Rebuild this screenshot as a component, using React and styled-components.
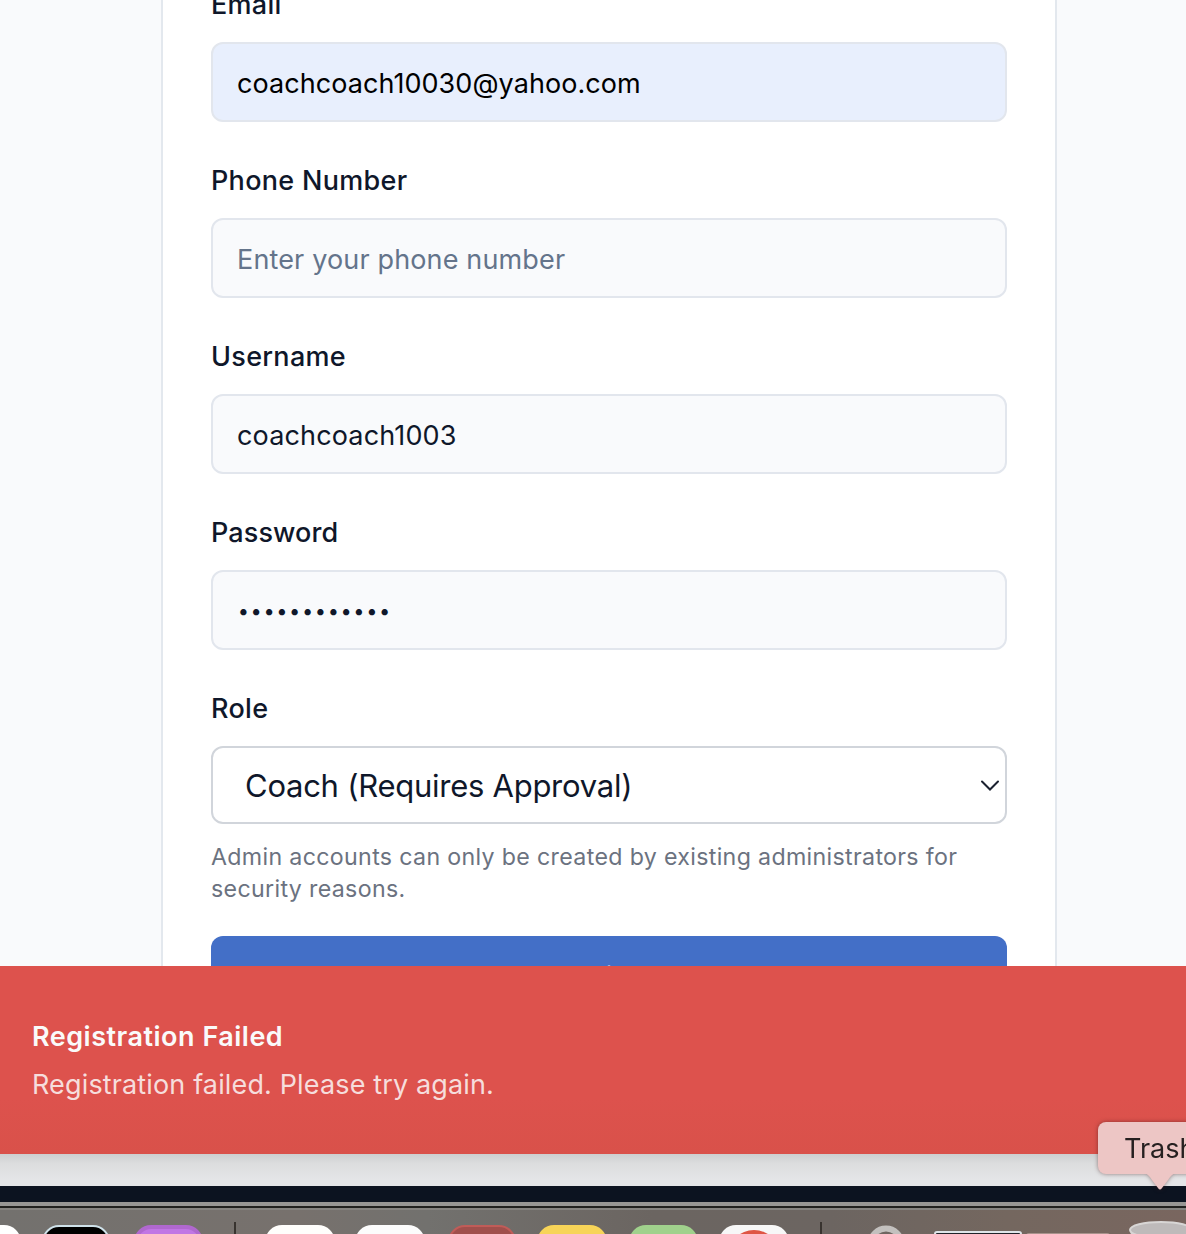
import React from "react";
import styled, { createGlobalStyle } from "styled-components";

const GlobalStyle = createGlobalStyle`
  * { box-sizing: border-box; }
  body {
    margin: 0;
    overflow: hidden;
    font-family: Inter, "Liberation Sans", sans-serif;
    color: #0f172a;
  }
`;

const Desktop = styled.div`
  position: relative;
  width: 1186px;
  height: 1234px;
  display: flex;
  flex-direction: column;
  overflow: hidden;
`;

const Page = styled.main`
  height: 966px;
  overflow: hidden;
  background: #f9fafc;
  padding-left: 161px;
`;

const Card = styled.form`
  width: 896px;
  height: 1100px;
  margin-top: -9px;
  padding: 0 48px;
  background: #fff;
  border: 2px solid #e3e8ee;
  border-width: 0 2px;
  display: flex;
  flex-direction: column;
`;

const Field = styled.div`
  display: flex;
  flex-direction: column;
  gap: 23px;
  margin-bottom: 45px;
`;

const Label = styled.label`
  height: 28px;
  line-height: 27px;
  font-size: 27px;
  font-weight: 500;
  letter-spacing: ${(p) => p.$track ?? 0.3}px;
  white-space: nowrap;
`;

const InputBox = styled.div`
  height: 80px;
  padding: 3px 24px 0;
  border: 2px solid #e2e6ed;
  border-radius: 12px;
  background: ${(p) => (p.$autofilled ? "#e8effd" : "#f9fafc")};
  color: ${(p) => (p.$placeholder ? "#64748b" : p.$autofilled ? "#000" : "#0f172a")};
  display: flex;
  align-items: center;
  font-size: 27px;
  letter-spacing: ${(p) => (p.$autofilled ? 0.06 : 0.15)}px;
  white-space: nowrap;
`;

const Dots = styled.span`
  margin: 0 0 1px 0.7px;
  font-size: 20px;
  letter-spacing: 1.6px;
`;

const SelectBox = styled.div`
  height: 78px;
  padding: 1px 5px 0 32px;
  border: 2px solid #d1d5db;
  border-radius: 12px;
  background: #fff;
  display: flex;
  align-items: center;
  justify-content: space-between;
  font-size: 31px;
  letter-spacing: -0.26px;
  white-space: nowrap;
`;

const Help = styled.p`
  margin: -28px 0 31px;
  color: #6b7280;
  font-size: 23.2px;
  line-height: 32px;
  letter-spacing: 0.33px;
  white-space: nowrap;
`;

const Submit = styled.button`
  height: 80px;
  flex: none;
  border: 0;
  padding: 0;
  border-radius: 12px;
  background: #436fc7;
  color: #fff;
  font: 500 27px Inter, sans-serif;
`;

const Toast = styled.section`
  height: 188px;
  padding: 55px 32px 0;
  background: linear-gradient(#dd524d 70%, #d9514a);
  color: #fafafa;
  display: flex;
  flex-direction: column;
  gap: 16px;
`;

const ToastTitle = styled.div`
  font-size: 27px;
  line-height: 32px;
  font-weight: 600;
  letter-spacing: 0.5px;
`;

const ToastText = styled.div`
  font-size: 27px;
  line-height: 32px;
  letter-spacing: 0.14px;
  color: #f6dddc;
`;

const PageEdge = styled.div`
  height: 32px;
  background: linear-gradient(#cdcfd0, #dcddde 30%, #e4e5e7 80%);
`;

const Wallpaper = styled.div`
  height: 16px;
  background: #0c1320;
`;

const Dock = styled.footer`
  height: 32px;
  border-top: 4px solid #979694;
  box-shadow: inset 0 2px #21211f, inset 0 4px #858380;
  background: linear-gradient(90deg, #73716e, #77716d 25%, #72716e 36%, #6b6561 55%, #6c6561 70%, #74675f 85%, #79665f);
  display: flex;
  align-items: flex-start;
  overflow: hidden;
`;

const AppIcon = styled.div`
  flex: none;
  width: ${(p) => p.$w}px;
  height: 68px;
  margin: 18.5px 0 0 ${(p) => p.$gap}px;
  border-radius: 17px;
  background: ${(p) => p.$bg};
  border: ${(p) => p.$border || "0"};
  overflow: hidden;
`;

const Divider = styled.div`
  flex: none;
  width: 2px;
  height: 40px;
  margin: 16px 0 0 ${(p) => p.$gap}px;
  background: #38332f;
`;

const DockWindow = styled.div`
  flex: none;
  width: ${(p) => p.$w}px;
  height: 40px;
  margin: ${(p) => p.$top}px 0 0 ${(p) => p.$gap}px;
  border: 2px solid ${(p) => p.$edge};
  border-radius: 3px;
  background: #20242a;
`;

const DockArt = styled.svg`
  flex: none;
  display: block;
  margin: ${(p) => p.$top}px 0 0 ${(p) => p.$gap}px;
`;

const Tooltip = styled.div`
  position: absolute;
  left: 1098px;
  top: 1122px;
  width: 124px;
  height: 52px;
  padding-left: 26px;
  border-radius: 8px;
  background: #edc6c5;
  color: #262020;
  font-size: 27px;
  line-height: 53px;
  filter: drop-shadow(0 0 2px rgba(60, 20, 20, 0.5));
`;

const Pointer = styled.svg`
  position: absolute;
  left: 46px;
  top: 51px;
`;

export default function App() {
  return (
    <>
      <GlobalStyle />
      <Desktop>
        <Page>
          <Card>
            <Field>
              <Label>Email</Label>
              <InputBox $autofilled>coachcoach10030@yahoo.com</InputBox>
            </Field>
            <Field>
              <Label>Phone Number</Label>
              <InputBox $placeholder>Enter your phone number</InputBox>
            </Field>
            <Field>
              <Label>Username</Label>
              <InputBox>coachcoach1003</InputBox>
            </Field>
            <Field>
              <Label $track={0.1}>Password</Label>
              <InputBox><Dots>••••••••••••</Dots></InputBox>
            </Field>
            <Field>
              <Label>Role</Label>
              <SelectBox>
                Coach (Requires Approval)
                <svg width="20" height="14" viewBox="0 0 20 14" fill="none" stroke="#1b2130" strokeWidth="2">
                  <path d="M2 2.5 10 10.5 18 2.5" strokeLinecap="round" />
                </svg>
              </SelectBox>
            </Field>
            <Help>
              Admin accounts can only be created by existing administrators for
              <br />
              security reasons.
            </Help>
            <Submit type="button">Register</Submit>
          </Card>
        </Page>
        <Toast>
          <ToastTitle>Registration Failed</ToastTitle>
          <ToastText>Registration failed. Please try again.</ToastText>
        </Toast>
        <PageEdge />
        <Wallpaper />
        <Dock>
          <AppIcon $w={68} $gap={-47} $bg="#fff" />
          <AppIcon $w={68} $gap={21} $bg="#000" $border="2px solid #cfe2ea" />
          <AppIcon $w={69} $gap={24} $bg="#c176e4" $border="4px solid #b068cf" />
          <Divider $gap={31} />
          <AppIcon $w={70} $gap={29} $bg="#fffefc" />
          <AppIcon $w={70} $gap={20} $bg="#fcfcfc" />
          <AppIcon $w={68} $gap={23} $bg="#a04f4c" $border="2px solid #c05c58" />
          <AppIcon $w={70} $gap={21} $bg="#f7d458" />
          <AppIcon $w={69} $gap={22} $bg="#a0d18c" />
          <AppIcon $w={70} $gap={21} $bg="#f7f7f7">
            <svg width="70" height="68" viewBox="0 0 70 68"><circle cx="35" cy="31" r="26" fill="#df5645" /></svg>
          </AppIcon>
          <Divider $gap={31} />
          <DockArt $gap={45} $top={19} width="38" height="38" viewBox="0 0 38 38">
            <circle cx="19" cy="19" r="15.5" fill="none" stroke="#c3c0be" strokeWidth="6" />
          </DockArt>
          <DockWindow $w={88} $gap={29} $top={25} $edge="#dfe6ea" />
          <DockWindow $w={84} $gap={4} $top={27} $edge="#a8938c" />
          <DockArt $gap={18} $top={15} width="66" height="30" viewBox="0 0 66 30">
            <path d="M2 9L6 30H60L64 9Z" fill="#cfcccb" />
            <ellipse cx="33" cy="9" rx="31" ry="8" fill="#bebaba" stroke="#d8d6d5" strokeWidth="2" />
          </DockArt>
        </Dock>
        <Tooltip>
          Trash
          <Pointer width="32" height="18" viewBox="0 0 32 18">
            <path d="M0 0H32C28 1 26 4 24 7L18 15Q16 18 14 15L8 7C6 4 4 1 0 0Z" fill="#edc6c5" />
          </Pointer>
        </Tooltip>
      </Desktop>
    </>
  );
}
